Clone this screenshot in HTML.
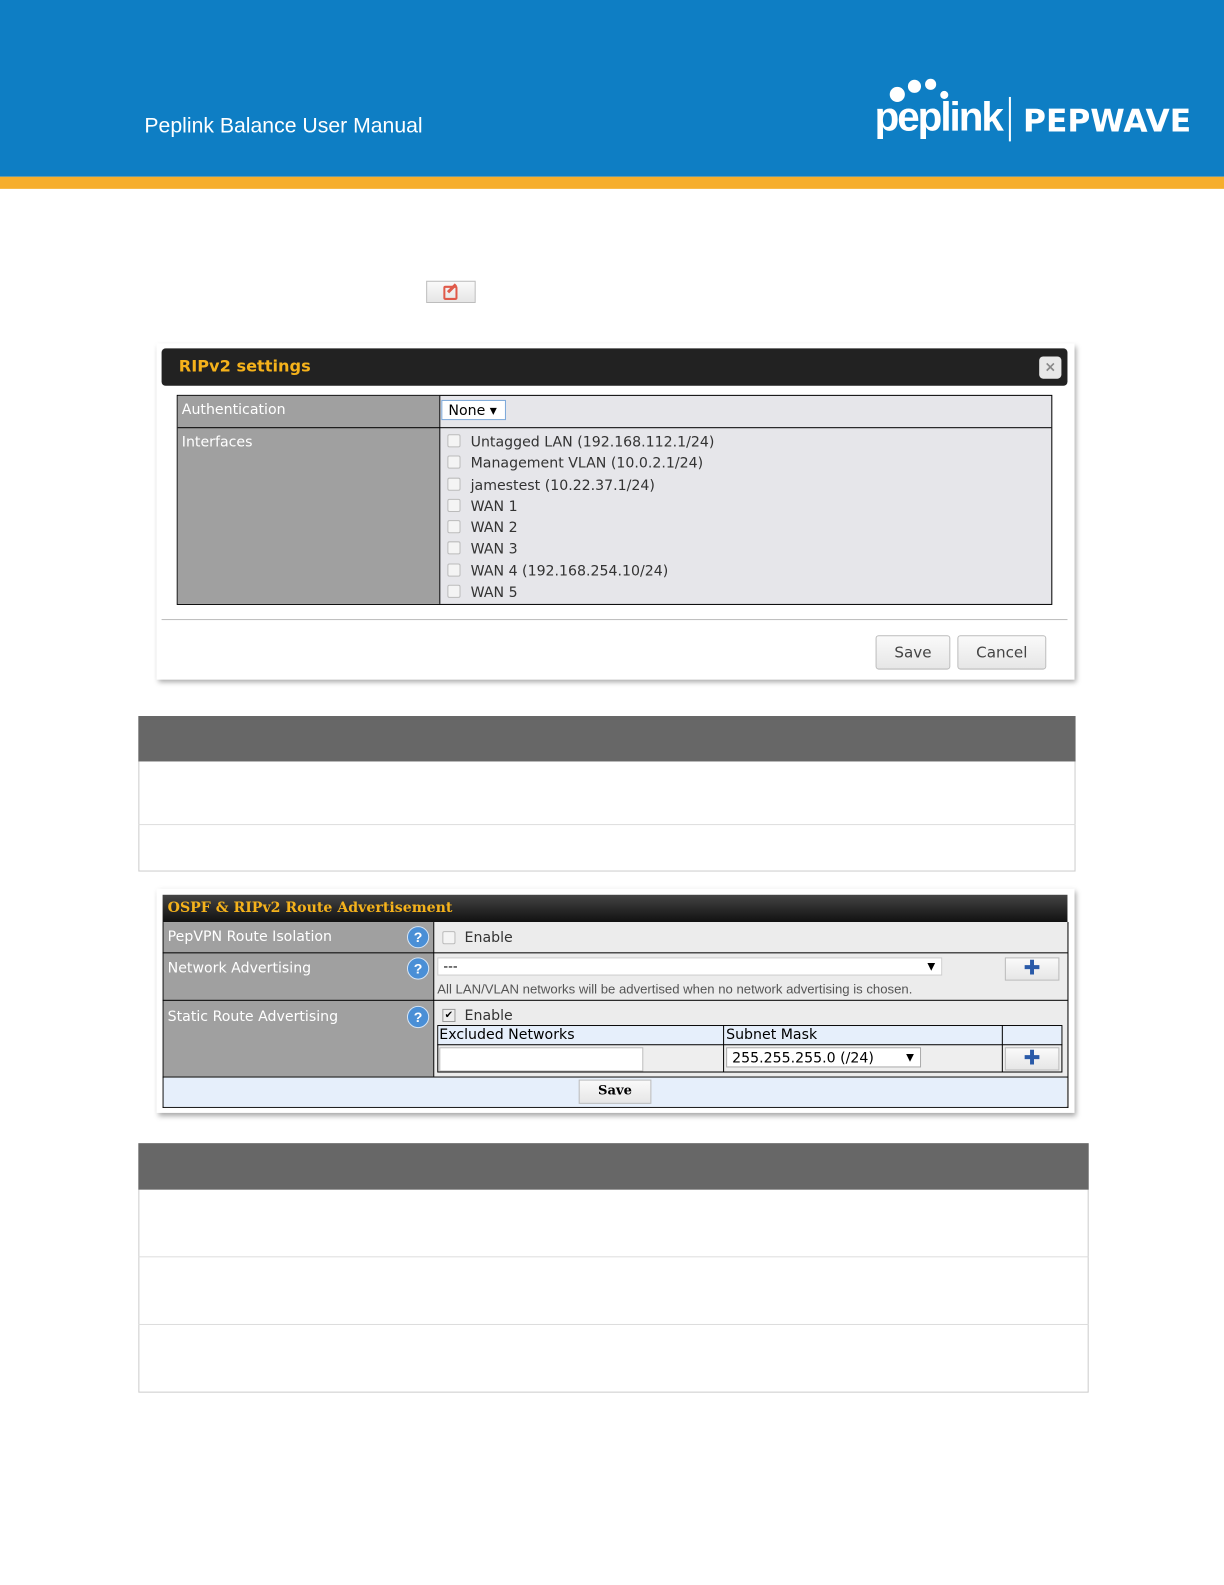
<!DOCTYPE html>
<html><head><meta charset="utf-8"><style>
body{margin:0;width:1224px;height:1584px;background:#fff;position:relative;font-family:"DejaVu Sans","Liberation Sans",sans-serif;overflow:hidden}
#w{position:absolute;left:0;top:0;width:1212px;height:1569px;transform:scale(1.0099);transform-origin:0 0}
.a{position:absolute}
.hdr{left:0;top:0;width:1212px;height:175px;background:#0e7ec4}
.org{left:0;top:175px;width:1212px;height:12px;background:#f6ae2d}
.t{color:#fff}
.lbl{color:#fff;font-size:14px}
.cb{width:11px;height:11px;border:1px solid #bbb;background:#f4f4f4;border-radius:2px}
.q{width:20px;height:20px;border-radius:50%;background:#4a8fd6;border:1px solid #d8e6f5;color:#fff;font-weight:bold;font-size:14px;text-align:center;line-height:20px;font-family:"Liberation Sans",sans-serif}
.btn{background:linear-gradient(#fafafa,#e6e6e6);border:1px solid #bbb;border-radius:3px}
.plus{color:#2a5aa8;font-weight:bold;font-size:20px;text-align:center;line-height:20px}
</style></head><body><div id="w">
<div class="a hdr"></div><div class="a org"></div>
<div class="a t" style="left:143px;top:113px;font-size:21px;font-family:'Liberation Sans',sans-serif">Peplink Balance User Manual</div>
<div class="a" style="left:881px;top:86px;width:15px;height:15px;border-radius:50%;background:#fff"></div>
<div class="a" style="left:899px;top:79px;width:13px;height:13px;border-radius:50%;background:#fff"></div>
<div class="a" style="left:916px;top:78px;width:11px;height:11px;border-radius:50%;background:#fff"></div>
<div class="a" style="left:931px;top:90px;width:8px;height:8px;border-radius:50%;background:#fff"></div>
<div class="a t" style="left:866px;top:94px;font-size:40px;font-weight:bold;letter-spacing:-2px;font-family:'Liberation Sans',sans-serif">peplink</div>
<div class="a" style="left:999px;top:96px;width:2px;height:44px;background:#fff"></div>
<div class="a t" style="left:1013px;top:102px;font-size:31px;font-weight:bold;font-family:'DejaVu Sans',sans-serif">PEPWAVE</div>

<div class="a btn" style="left:422px;top:278px;width:47px;height:20px;border-radius:0"></div>
<div class="a" style="left:439px;top:283px;width:10px;height:10px;border:2px solid #e05a4a;border-radius:2px"></div>
<div class="a" style="left:446px;top:280px;width:3px;height:11px;background:#e05a4a;transform:rotate(45deg)"></div>

<div class="a" style="left:155px;top:340px;width:909px;height:333px;background:#fff;box-shadow:2px 3px 5px rgba(0,0,0,.35)"></div>
<div class="a" style="left:160px;top:345px;width:897px;height:37px;background:#222;border-radius:4px"></div>
<div class="a" style="left:177px;top:353px;color:#f5b21b;font-weight:bold;font-size:16px">RIPv2 settings</div>
<div class="a" style="left:1029px;top:353px;width:22px;height:22px;background:#e8e8e8;border-radius:4px;color:#888;text-align:center;line-height:22px;font-weight:bold;font-size:14px">×</div>
<div class="a" style="left:175px;top:391px;width:865px;height:206px;border:1px solid #000;background:#e6e6ea"></div>
<div class="a" style="left:176px;top:392px;width:259px;height:206px;background:#a0a0a0"></div>
<div class="a" style="left:176px;top:423px;width:865px;height:1px;background:#000"></div>
<div class="a" style="left:435px;top:392px;width:1px;height:206px;background:#000"></div>
<div class="a lbl" style="left:180px;top:398px">Authentication</div>
<div class="a lbl" style="left:180px;top:430px">Interfaces</div>
<div class="a" style="left:437px;top:396px;width:64px;height:20px;background:#fff;border:1px solid #7aa7d8;font-size:14px;line-height:20px;padding-left:6px;box-sizing:border-box">None ▾</div>
<div class="a" style="left:443px;top:428px;font-size:14px;line-height:21.3px;color:#333">
<div><span class="cb" style="display:inline-block;vertical-align:-1px;margin-right:10px"></span>Untagged LAN (192.168.112.1/24)</div>
<div><span class="cb" style="display:inline-block;vertical-align:-1px;margin-right:10px"></span>Management VLAN (10.0.2.1/24)</div>
<div><span class="cb" style="display:inline-block;vertical-align:-1px;margin-right:10px"></span>jamestest (10.22.37.1/24)</div>
<div><span class="cb" style="display:inline-block;vertical-align:-1px;margin-right:10px"></span>WAN 1</div>
<div><span class="cb" style="display:inline-block;vertical-align:-1px;margin-right:10px"></span>WAN 2</div>
<div><span class="cb" style="display:inline-block;vertical-align:-1px;margin-right:10px"></span>WAN 3</div>
<div><span class="cb" style="display:inline-block;vertical-align:-1px;margin-right:10px"></span>WAN 4 (192.168.254.10/24)</div>
<div><span class="cb" style="display:inline-block;vertical-align:-1px;margin-right:10px"></span>WAN 5</div>
</div>
<div class="a" style="left:160px;top:613px;width:897px;height:1px;background:#bbb"></div>
<div class="a btn" style="left:867px;top:629px;width:72px;height:32px;text-align:center;line-height:32px;font-size:15px;color:#444">Save</div>
<div class="a btn" style="left:948px;top:629px;width:86px;height:32px;text-align:center;line-height:32px;font-size:15px;color:#444">Cancel</div>

<div class="a" style="left:137px;top:709px;width:926px;height:152px;border:1px solid #ccc"></div>
<div class="a" style="left:137px;top:709px;width:928px;height:45px;background:#676767"></div>
<div class="a" style="left:137px;top:816px;width:928px;height:1px;background:#ddd"></div>

<div class="a" style="left:155px;top:880px;width:909px;height:222px;background:#fff;box-shadow:2px 3px 5px rgba(0,0,0,.35)"></div>
<div class="a" style="left:161px;top:886px;width:896px;height:27px;background:linear-gradient(#444,#111)"></div>
<div class="a" style="left:166px;top:891px;color:#f5b21b;font-weight:bold;font-size:14px;font-family:'DejaVu Serif',serif">OSPF &amp; RIPv2 Route Advertisement</div>
<div class="a" style="left:161px;top:913px;width:895px;height:183px;border:1px solid #000;border-top:none;background:#ececec"></div>
<div class="a" style="left:162px;top:913px;width:267px;height:153px;background:#a0a0a0"></div>
<div class="a" style="left:429px;top:913px;width:1px;height:153px;background:#000"></div>
<div class="a" style="left:161px;top:943px;width:896px;height:1px;background:#000"></div>
<div class="a" style="left:161px;top:990px;width:896px;height:1px;background:#000"></div>
<div class="a" style="left:161px;top:1066px;width:896px;height:1px;background:#000"></div>
<div class="a" style="left:162px;top:1067px;width:894px;height:29px;background:#e6effb"></div>
<div class="a lbl" style="left:166px;top:920px">PepVPN Route Isolation</div>
<div class="a lbl" style="left:166px;top:951px">Network Advertising</div>
<div class="a lbl" style="left:166px;top:999px">Static Route Advertising</div>
<div class="a q" style="left:403px;top:917px">?</div>
<div class="a q" style="left:403px;top:948px">?</div>
<div class="a q" style="left:403px;top:996px">?</div>
<div class="a cb" style="left:438px;top:922px"></div>
<div class="a" style="left:460px;top:921px;font-size:14px;color:#333">Enable</div>
<div class="a" style="left:433px;top:948px;width:500px;height:18px;background:#fff;border:1px solid #ccc;font-size:13px;line-height:18px;padding-left:5px;box-sizing:border-box">---<span style="position:absolute;right:6px;font-size:10px">▼</span></div>
<div class="a btn" style="left:995px;top:948px;width:52px;height:21px;border-radius:0"></div>
<div class="a plus" style="left:995px;top:948px;width:54px">✚</div>
<div class="a" style="left:433px;top:972px;font-size:13px;color:#555;font-family:'Liberation Sans',sans-serif">All LAN/VLAN networks will be advertised when no network advertising is chosen.</div>
<div class="a" style="left:438px;top:999px;width:11px;height:11px;border:1px solid #999;background:#eee;font-size:10px;line-height:11px;text-align:center">✔</div>
<div class="a" style="left:460px;top:998px;font-size:14px;color:#333">Enable</div>
<div class="a" style="left:433px;top:1015px;width:617px;height:45px;border:1px solid #000;background:#eee"></div>
<div class="a" style="left:434px;top:1016px;width:617px;height:18px;background:#e6effb"></div>
<div class="a" style="left:433px;top:1034px;width:619px;height:1px;background:#000"></div>
<div class="a" style="left:716px;top:1015px;width:1px;height:46px;background:#000"></div>
<div class="a" style="left:992px;top:1015px;width:1px;height:46px;background:#000"></div>
<div class="a" style="left:435px;top:1017px;font-size:14px">Excluded Networks</div>
<div class="a" style="left:719px;top:1017px;font-size:14px">Subnet Mask</div>
<div class="a" style="left:435px;top:1037px;width:200px;height:22px;background:#fff;border:1px solid #bbb"></div>
<div class="a" style="left:719px;top:1037px;width:193px;height:20px;background:#fff;border:1px solid #aaa;font-size:14px;line-height:20px;padding-left:5px;box-sizing:border-box">255.255.255.0 (/24)<span style="position:absolute;right:6px;font-size:10px">▼</span></div>
<div class="a btn" style="left:995px;top:1037px;width:52px;height:21px;border-radius:0"></div>
<div class="a plus" style="left:995px;top:1037px;width:54px">✚</div>
<div class="a btn" style="left:573px;top:1069px;width:70px;height:22px;border-radius:0;text-align:center;line-height:22px;font-weight:bold;font-size:13px;font-family:'DejaVu Serif',serif">Save</div>

<div class="a" style="left:137px;top:1132px;width:939px;height:245px;border:1px solid #ccc"></div>
<div class="a" style="left:137px;top:1132px;width:941px;height:46px;background:#676767"></div>
<div class="a" style="left:137px;top:1244px;width:941px;height:1px;background:#ddd"></div>
<div class="a" style="left:137px;top:1311px;width:941px;height:1px;background:#ddd"></div>
</div></body></html>
